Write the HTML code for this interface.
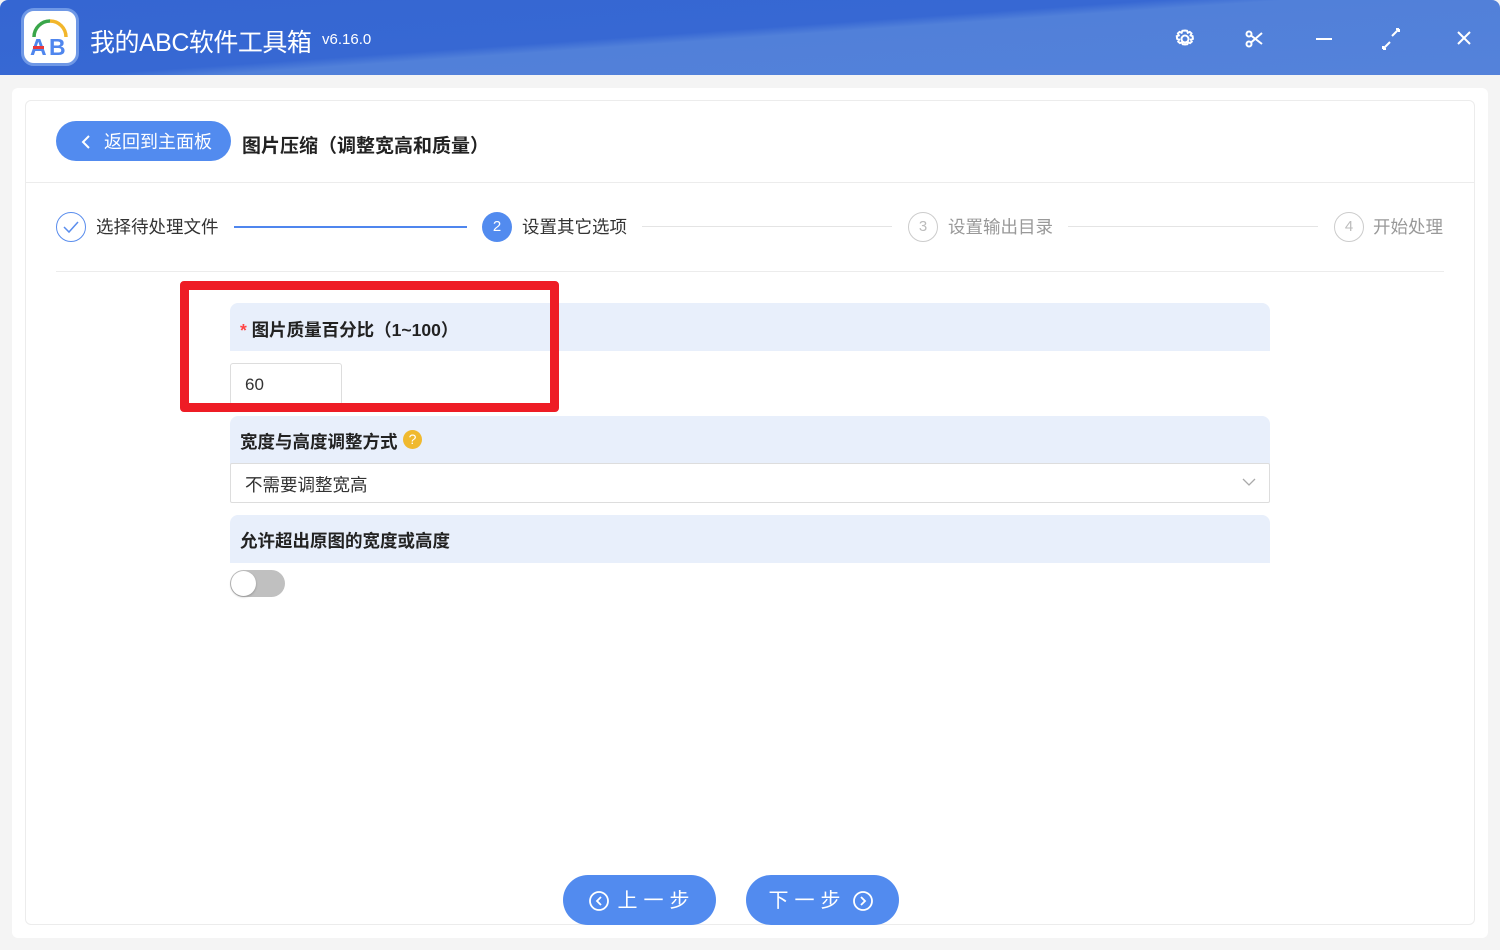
<!DOCTYPE html>
<html><head><meta charset="utf-8"><style>
*{margin:0;padding:0;box-sizing:border-box}
body{width:1500px;height:950px;overflow:hidden;background:#f4f4f4;font-family:"Liberation Sans","Noto Sans CJK SC",sans-serif;position:relative}
.abs{position:absolute}
.top{left:0;top:0;width:1500px;height:75px;background:linear-gradient(176deg,#3566d2 0%,#3768d3 45%,#5180d9 50%,#5482da 100%);border-radius:8px 8px 0 0}
.logo{left:21px;top:8px;width:58px;height:58px;border-radius:13px;background:#fff;border:3px solid #6f98e6}
.panel{left:12px;top:88px;width:1476px;height:850px;background:#fff;border-radius:6px}
.card{left:25px;top:100px;width:1450px;height:825px;border:1px solid #ececec;border-radius:6px;background:#fff}
.txt{white-space:nowrap}
.circ{width:30px;height:30px;border-radius:50%;text-align:center;line-height:28px;font-size:15px}
.band{left:230px;width:1040px;height:48px;background:#e8effb;border-radius:8px 8px 0 0}
.lbl{font-size:17.5px;font-weight:bold;color:#222}
.btn{height:50px;width:153px;border-radius:25px;background:#528bef;color:#fff;font-size:20px;line-height:52px;text-align:center;letter-spacing:6px}
</style></head><body>
<div class="abs top"></div>
<div class="abs logo"><svg width="52" height="52" viewBox="0 0 52 52"><path d="M10 26 A16 16 0 0 1 26 10" stroke="#3aa64a" stroke-width="3.5" fill="none"/><path d="M26 10 A16 16 0 0 1 42 26" stroke="#f2b62b" stroke-width="3.5" fill="none"/><text x="6" y="44" font-family="Liberation Sans" font-weight="bold" font-size="23" fill="#4f86ee">A</text><text x="25" y="44" font-family="Liberation Sans" font-weight="bold" font-size="23" fill="#4f86ee">B</text><rect x="9" y="35" width="11" height="3" fill="#e8383d"/></svg></div>
<div class="abs txt" style="left:90px;top:23px;color:#fff;font-size:25px;letter-spacing:-0.5px">我的ABC软件工具箱</div>
<div class="abs txt" style="left:322px;top:31px;color:#fff;font-size:15px">v6.16.0</div>
<svg class="abs" style="left:1170px;top:25px" width="310" height="30" viewBox="0 0 310 30" fill="none" stroke="#fff" stroke-width="2">
<circle cx="15" cy="14" r="3.5"/><path d="M15 5.5l2 .3.8 2 2-.9 1.7 1.5-.9 2 2 .8.3 2.6-2 .8.9 2-1.7 1.5-2-.9-.8 2-2.3.3-2.3-.3-.8-2-2 .9-1.7-1.5.9-2-2-.8-.3-2.6 2-.8-.9-2 1.7-1.5 2 .9.8-2z"/>
<circle cx="79" cy="19" r="2.5"/><circle cx="79" cy="9" r="2.5"/><path d="M81 10.5L92 19M81 17.5L92 8"/>
<path d="M146 14h16"/><path d="M217 20l-4 4M213 24v-3M213 24h3M225 8l4-4M229 4v3M229 4h-3M217 20l3-3M225 8l-3 3"/>
<path d="M288 7l12 12M300 7l-12 12"/></svg>
<div class="abs panel"></div>
<div class="abs card"></div>
<div class="abs btn" style="left:56px;top:121px;width:175px;height:40px;line-height:42px;font-size:18px;letter-spacing:0;border-radius:20px;text-align:left;padding-left:48px">返回到主面板</div>
<svg class="abs" style="left:80px;top:134px" width="12" height="16"><path d="M9 2L3 8l6 6" stroke="#fff" stroke-width="2" fill="none"/></svg>
<div class="abs txt" style="left:242px;top:131px;font-size:19px;font-weight:bold;color:#222">图片压缩（调整宽高和质量）</div>
<div class="abs" style="left:26px;top:182px;width:1448px;height:1px;background:#ececec"></div>
<div class="abs circ" style="left:56px;top:212px;border:1px solid #5a8ded"><svg width="18" height="14" style="margin-top:7px"><path d="M2 7l5 5 9-10" stroke="#5a8ded" stroke-width="1.5" fill="none"/></svg></div>
<div class="abs txt" style="left:96px;top:214px;font-size:17.5px;color:#333">选择待处理文件</div>
<div class="abs" style="left:234px;top:226px;width:233px;height:2px;background:#4f86ee"></div>
<div class="abs circ" style="left:482px;top:212px;background:#528bef;color:#fff;line-height:30px">2</div>
<div class="abs txt" style="left:522px;top:214px;font-size:17.5px;color:#333">设置其它选项</div>
<div class="abs" style="left:642px;top:226px;width:250px;height:1px;background:#e4e4e4"></div>
<div class="abs circ" style="left:908px;top:212px;border:1px solid #ccc;color:#bbb">3</div>
<div class="abs txt" style="left:948px;top:214px;font-size:17.5px;color:#999">设置输出目录</div>
<div class="abs" style="left:1068px;top:226px;width:250px;height:1px;background:#e4e4e4"></div>
<div class="abs circ" style="left:1334px;top:212px;border:1px solid #ccc;color:#bbb">4</div>
<div class="abs txt" style="left:1373px;top:214px;font-size:17.5px;color:#999">开始处理</div>
<div class="abs" style="left:56px;top:271px;width:1388px;height:1px;background:#ececec"></div>

<div class="abs band" style="top:303px"></div>
<div class="abs txt lbl" style="left:240px;top:317px"><span style="color:#f44">*</span> 图片质量百分比（1~100）</div>
<div class="abs" style="left:230px;top:363px;width:112px;height:42px;border:1px solid #ddd;border-radius:3px;font-size:17px;color:#333;padding:11px 0 0 14px">60</div>
<div class="abs" style="left:180px;top:281px;width:379px;height:131px;border:9px solid #ee1c25;border-radius:4px"></div>

<div class="abs band" style="top:416px"></div>
<div class="abs txt lbl" style="left:240px;top:429px">宽度与高度调整方式</div>
<div class="abs" style="left:403px;top:430px;width:19px;height:19px;border-radius:50%;background:#f0b92e;color:#fff;font-size:14px;text-align:center;line-height:19px">?</div>
<div class="abs" style="left:230px;top:463px;width:1040px;height:40px;border:1px solid #ddd;border-radius:2px;font-size:17.5px;color:#333;padding:8px 0 0 14px">不需要调整宽高</div>
<svg class="abs" style="left:1242px;top:477px" width="14" height="10"><path d="M1 2l6 6 6-6" stroke="#aaa" stroke-width="1.3" fill="none"/></svg>

<div class="abs band" style="top:515px"></div>
<div class="abs txt lbl" style="left:240px;top:528px">允许超出原图的宽度或高度</div>
<div class="abs" style="left:230px;top:570px;width:55px;height:27px;border-radius:14px;background:#c0c0c0"></div>
<div class="abs" style="left:231px;top:571px;width:25px;height:25px;border-radius:50%;background:#fff;box-shadow:0 1px 2px rgba(0,0,0,.25)"></div>

<div class="abs btn" style="left:563px;top:875px;padding-left:34px">上一步</div>
<svg class="abs" style="left:588px;top:890px" width="22" height="22"><circle cx="11" cy="11" r="9" stroke="#fff" stroke-width="1.8" fill="none"/><path d="M13 7l-4 4 4 4" stroke="#fff" stroke-width="1.8" fill="none"/></svg>
<div class="abs btn" style="left:746px;top:875px;padding-right:30px">下一步</div>
<svg class="abs" style="left:852px;top:890px" width="22" height="22"><circle cx="11" cy="11" r="9" stroke="#fff" stroke-width="1.8" fill="none"/><path d="M9 7l4 4-4 4" stroke="#fff" stroke-width="1.8" fill="none"/></svg>
</body></html>
